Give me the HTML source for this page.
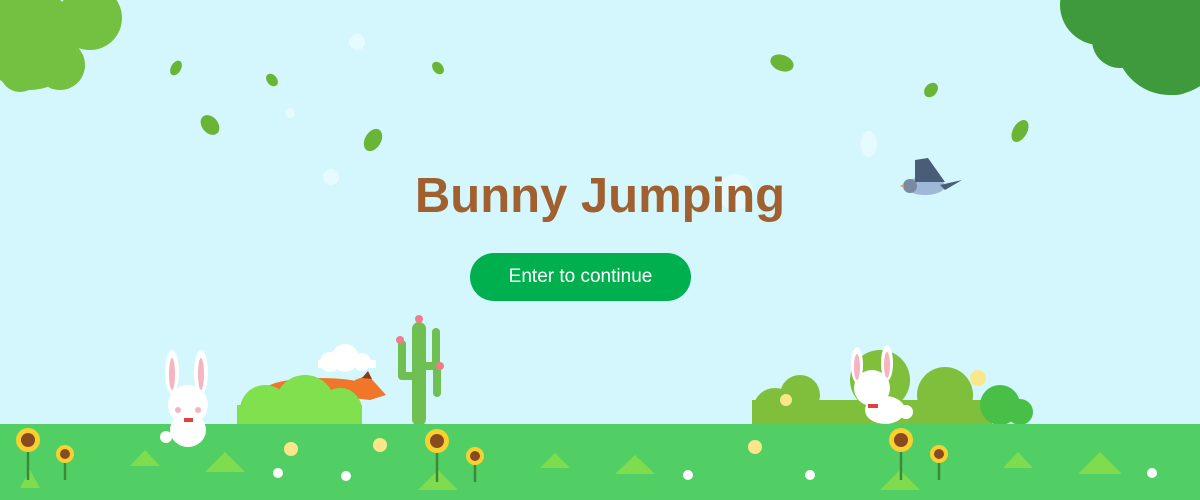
<!DOCTYPE html>
<html><head><meta charset="utf-8"><style>
html,body{margin:0;padding:0;width:1200px;height:500px;overflow:hidden;background:#d3f7fc}
svg{position:absolute;left:0;top:0}
.t{position:absolute;left:0;width:1200px;top:168px;text-align:center;font:bold 49px "Liberation Sans",sans-serif;color:#a0602f}
.b{position:absolute;left:470px;top:253px;width:221px;height:48px;border-radius:24px;background:#00b04f;color:#fff;font:19px "Liberation Sans",sans-serif;line-height:48px;text-align:center}
</style></head><body>
<svg width="1200" height="500" viewBox="0 0 1200 500">
<g fill="#74c040"><circle cx="30" cy="40" r="50"/><circle cx="90" cy="18" r="32"/><circle cx="60" cy="65" r="25"/><circle cx="20" cy="72" r="20"/></g>
<g fill="#3e9a3a"><circle cx="1170" cy="40" r="55"/><circle cx="1100" cy="5" r="40"/><circle cx="1175" cy="70" r="25"/><circle cx="1120" cy="40" r="28"/></g>
<g fill="#6ab535">
<ellipse cx="176" cy="68" rx="5" ry="8" transform="rotate(30 176 68)"/>
<ellipse cx="272" cy="80" rx="5" ry="7" transform="rotate(-40 272 80)"/>
<ellipse cx="438" cy="68" rx="5" ry="7" transform="rotate(-40 438 68)"/>
<ellipse cx="210" cy="125" rx="8" ry="11" transform="rotate(-40 210 125)"/>
<ellipse cx="373" cy="140" rx="8" ry="12" transform="rotate(30 373 140)"/>
<ellipse cx="782" cy="63" rx="8" ry="12" transform="rotate(-70 782 63)"/>
<ellipse cx="931" cy="90" rx="6" ry="8" transform="rotate(40 931 90)"/>
<ellipse cx="1020" cy="131" rx="7" ry="12" transform="rotate(30 1020 131)"/>
</g>
<g fill="#e6fbff"><circle cx="357" cy="42" r="8"/><circle cx="331" cy="177" r="8"/><circle cx="290" cy="113" r="5"/><ellipse cx="869" cy="144" rx="8" ry="13"/><circle cx="735" cy="192" r="18"/></g>
<g><ellipse cx="925" cy="186" rx="20" ry="9" fill="#9fb8d8"/><path d="M915 182 L915 160 L928 158 L945 182Z" fill="#4a5d78"/><circle cx="910" cy="186" r="7" fill="#7a8aa0"/><path d="M900 186 L904 184 L904 188Z" fill="#e0a040"/><path d="M940 185 L962 180 L945 190Z" fill="#4a5d78"/></g>
<g fill="#fff"><circle cx="345" cy="358" r="14"/><circle cx="330" cy="362" r="10"/><circle cx="362" cy="362" r="9"/><rect x="318" y="360" width="58" height="8"/></g>
<ellipse cx="320" cy="390" rx="55" ry="12" fill="#f0762a"/>
<path d="M355 380 L368 375 L386 395 L370 400 L352 398Z" fill="#f0762a"/>
<path d="M362 378 L368 371 L372 379Z" fill="#8a3a1a"/>
<g fill="#80e04e"><circle cx="305" cy="405" r="30"/><circle cx="265" cy="410" r="25"/><circle cx="340" cy="410" r="22"/><rect x="237" y="405" width="125" height="20"/></g>
<g fill="#7fbf3c"><circle cx="800" cy="395" r="20"/><circle cx="775" cy="410" r="22"/><circle cx="880" cy="380" r="30"/><circle cx="945" cy="395" r="28"/><rect x="752" y="400" width="240" height="25"/></g>
<g fill="#48c048"><circle cx="1000" cy="405" r="20"/><circle cx="1020" cy="412" r="13"/></g>
<g fill="#6fbf52"><rect x="412" y="322" width="14" height="104" rx="7"/><rect x="398" y="340" width="8" height="40" rx="4"/><rect x="398" y="372" width="20" height="8" rx="4"/><rect x="432" y="328" width="8" height="40" rx="4"/><rect x="422" y="362" width="18" height="8" rx="4"/><rect x="433" y="365" width="8" height="32" rx="4"/></g>
<g fill="#f07c8a"><circle cx="419" cy="319" r="4"/><circle cx="400" cy="340" r="4"/><circle cx="440" cy="366" r="4"/></g>
<rect x="0" y="424" width="1200" height="76" fill="#52cf64"/>
<g fill="#fff"><ellipse cx="172" cy="372" rx="7" ry="22"/><ellipse cx="201" cy="372" rx="7" ry="22"/><circle cx="188" cy="405" r="20"/><ellipse cx="188" cy="430" rx="18" ry="17"/><circle cx="166" cy="437" r="6"/>
<ellipse cx="857" cy="365" rx="6" ry="18"/><ellipse cx="887" cy="363" rx="6" ry="18"/><circle cx="872" cy="388" r="18"/><ellipse cx="885" cy="410" rx="20" ry="14"/><circle cx="906" cy="412" r="7"/></g>
<g fill="#f5b5c0"><ellipse cx="172" cy="374" rx="3" ry="16"/><ellipse cx="201" cy="374" rx="3" ry="16"/><ellipse cx="857" cy="367" rx="3" ry="13"/><ellipse cx="887" cy="365" rx="3" ry="13"/><circle cx="178" cy="410" r="3"/><circle cx="198" cy="410" r="3"/></g>
<rect x="184" y="418" width="9" height="4" fill="#e04040"/>
<rect x="868" y="404" width="10" height="4" fill="#e04040"/>
<g fill="#7edc4e">
<path d="M20 488 L30 470 L40 488Z"/><path d="M130 466 L145 450 L160 466Z"/><path d="M205 472 L225 452 L245 472Z"/><path d="M418 490 L438 470 L458 490Z"/><path d="M540 468 L555 453 L570 468Z"/><path d="M615 474 L635 455 L655 474Z"/><path d="M880 490 L900 470 L920 490Z"/><path d="M1003 468 L1018 452 L1033 468Z"/><path d="M1078 474 L1100 452 L1122 474Z"/>
</g>
<g stroke="#3a8a3a" stroke-width="2.5"><line x1="28" y1="442" x2="28" y2="480"/><line x1="65" y1="455" x2="65" y2="480"/><line x1="437" y1="442" x2="437" y2="482"/><line x1="475" y1="457" x2="475" y2="482"/><line x1="901" y1="442" x2="901" y2="480"/><line x1="939" y1="455" x2="939" y2="480"/></g>
<g fill="#f8d030"><circle cx="28" cy="440" r="12"/><circle cx="65" cy="454" r="9"/><circle cx="437" cy="441" r="12"/><circle cx="475" cy="456" r="9"/><circle cx="901" cy="440" r="12"/><circle cx="939" cy="454" r="9"/></g>
<g fill="#8a4a20"><circle cx="28" cy="440" r="7"/><circle cx="65" cy="454" r="5"/><circle cx="437" cy="441" r="7"/><circle cx="475" cy="456" r="5"/><circle cx="901" cy="440" r="7"/><circle cx="939" cy="454" r="5"/></g>
<g fill="#fbe68a"><circle cx="291" cy="449" r="7"/><circle cx="380" cy="445" r="7"/><circle cx="755" cy="447" r="7"/><circle cx="786" cy="400" r="6"/><circle cx="978" cy="378" r="8"/></g>
<g fill="#fff"><circle cx="278" cy="473" r="5"/><circle cx="346" cy="476" r="5"/><circle cx="688" cy="475" r="5"/><circle cx="810" cy="475" r="5"/><circle cx="1152" cy="473" r="5"/></g>
</svg>
<div class="t">Bunny Jumping</div>
<div class="b">Enter to continue</div>
</body></html>
